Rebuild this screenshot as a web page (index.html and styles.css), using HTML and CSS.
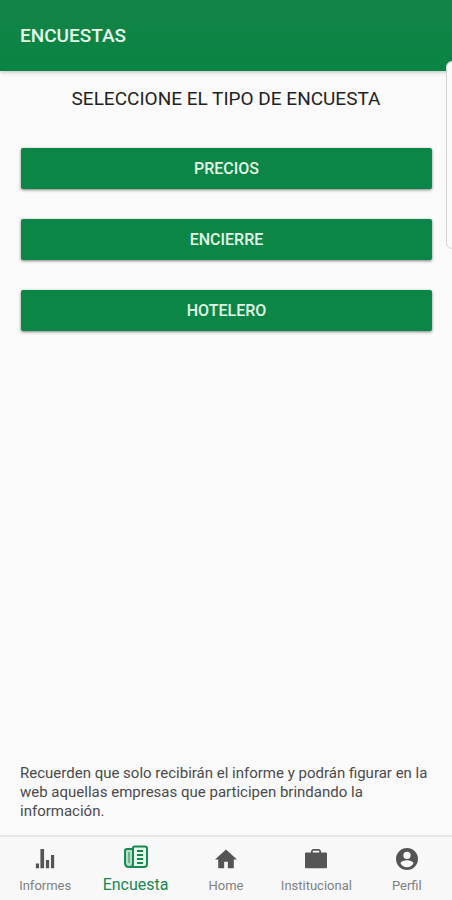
FILE: index.html
```html
<!DOCTYPE html>
<html lang="es">
<head>
<meta charset="utf-8">
<meta name="viewport" content="width=device-width, initial-scale=1">
<title>Encuestas</title>
<link rel="stylesheet" href="styles.css">
</head>
<body>
<header class="toolbar"><h1 class="toolbar-title">ENCUESTAS</h1></header>
<main class="content">
  <h2 class="heading">SELECCIONE EL TIPO DE ENCUESTA</h2>
  <div class="options">
    <button class="option" type="button">PRECIOS</button>
    <button class="option" type="button">ENCIERRE</button>
    <button class="option" type="button">HOTELERO</button>
  </div>
  <p class="note">Recuerden que solo recibirán el informe y podrán figurar en la web aquellas empresas que participen brindando la información.</p>
</main>
<nav class="tabs">
  <a class="tab" href="#informes">
    <svg class="icon" viewBox="0 0 24 24" aria-hidden="true"><path d="M2 17h3.500v5H2zM7 1h4v21H7zM13 13h3.500v9H13zM18.500 7.500H22V22h-3.500z"/></svg>
    <span>Informes</span>
  </a>
  <a class="tab tab-active" href="#encuesta" aria-current="page">
    <svg class="icon icon-paper" viewBox="0 0 24 24" aria-hidden="true"><path class="fold" d="M8 4H3Q1 4 1 6v12q0 4 4 4h3"/><path class="sheet" d="M10 1.500h11q2 0 2 2V19q0 3-3 3H6q3 0 3-3V3q0-1.500 1-1.500z"/><path class="lines" d="M13 6h6M13 10h6M13 14h6M13 18h6"/><path class="column" d="M5 7v11"/></svg>
    <span>Encuesta</span>
  </a>
  <a class="tab" href="#home">
    <svg class="icon" viewBox="0 0 24 24" aria-hidden="true"><path d="M12 1.500 0 12.500h3.500V22H10v-7h4v7h6.500v-9.500H24z"/></svg>
    <span>Home</span>
  </a>
  <a class="tab" href="#institucional">
    <svg class="icon" viewBox="0 0 24 24" aria-hidden="true"><path fill-rule="evenodd" d="M6.500 5V3l2-2h7l2 2v2H23q1 0 1 1v15q0 1-1 1H1q-1 0-1-1V6q0-1 1-1zM8.500 5h7V3h-7z"/></svg>
    <span>Institucional</span>
  </a>
  <a class="tab" href="#perfil">
    <svg class="icon" viewBox="0 0 24 24" aria-hidden="true"><path fill-rule="evenodd" d="M12 0a12 12 0 1 0 0 24 12 12 0 0 0 0-24zm0 4a4 4 0 1 1 0 8 4 4 0 0 1 0-8zm0 17c-3 0-5.600-1.500-7-4 0-2.400 4.700-3.600 7-3.600s7 1.200 7 3.600c-1.400 2.500-4 4-7 4z"/></svg>
    <span>Perfil</span>
  </a>
</nav>
<div class="edge-handle" aria-hidden="true"></div>
</body>
</html>
```
FILE: styles.css
```css
* {
  box-sizing: border-box;
}

body {
  position: relative;
  display: flex;
  flex-direction: column;
  min-height: 100vh;
  margin: 0;
  overflow-x: hidden;
  background: #fafafa;
  color: #222;
  font-family: Roboto, "Liberation Sans", sans-serif;
}

.toolbar {
  display: flex;
  align-items: center;
  height: 71px;
  padding: 0 20px;
  background: linear-gradient(#128447, #0a8443);
  box-shadow: 0 1px 4px rgba(0, 0, 0, 0.25);
}

.toolbar-title {
  margin: 0;
  color: #e6f8ea;
  font-size: 19px;
  font-weight: 500;
  line-height: 24px;
}

.content {
  display: flex;
  flex: 1;
  flex-direction: column;
  padding: 16px 0 14px;
}

.heading {
  margin: 0;
  font-size: 19px;
  font-weight: 400;
  line-height: 24px;
  text-align: center;
}

.options {
  display: grid;
  gap: 30px;
  padding: 37px 20px 0 21px;
}

.option {
  height: 41px;
  padding: 0;
  border: 0;
  border-radius: 2px;
  background: #0c8646;
  box-shadow: 0 1px 3px rgba(0, 0, 0, 0.5);
  color: #e1f6e6;
  font: 500 16px/20px Roboto, "Liberation Sans", sans-serif;
}

.note {
  margin: auto 0 0;
  padding: 0 20px;
  color: #4a4a4a;
  font-size: 15px;
  line-height: 19px;
}

.tabs {
  display: grid;
  grid-template-columns: repeat(5, 1fr);
  height: 65px;
  border-top: 2px solid #e8e8e8;
  background: #f8f8f8;
}

.tab {
  display: flex;
  flex-direction: column;
  align-items: center;
  gap: 8px;
  padding-top: 11px;
  color: #808080;
  font-size: 13px;
  line-height: 16px;
  text-decoration: none;
}

.tab-active {
  gap: 6px;
  padding-top: 8px;
  color: #168850;
  font-size: 16px;
  line-height: 20px;
}

.icon {
  width: 22px;
  height: 22px;
  fill: #555;
}

.icon-paper {
  width: 24px;
  height: 24px;
  fill: none;
  stroke: #168850;
  stroke-width: 2;
}

.fold {
  fill: #b8dcc8;
}

.sheet {
  fill: #e5f5eb;
}

.column {
  stroke: #6bb38b;
}

.edge-handle {
  position: absolute;
  top: 61px;
  right: -6px;
  width: 12px;
  height: 188px;
  border: 1px solid #d5d5d5;
  border-radius: 6px;
  background: #fafafa;
}
```
